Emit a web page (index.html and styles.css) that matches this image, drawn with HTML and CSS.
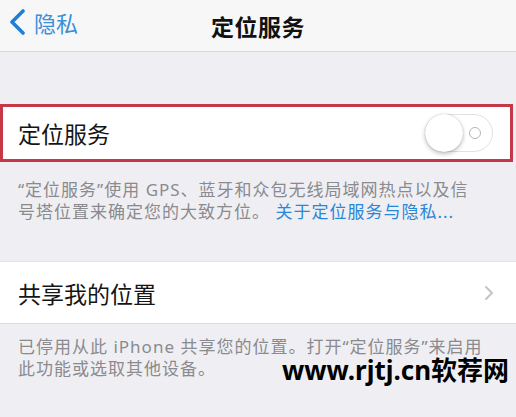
FILE: index.html
```html
<!DOCTYPE html>
<html lang="zh-CN">
  <head>
    <meta charset="UTF-8" />
    <meta name="viewport" content="width=device-width, initial-scale=1.0" />
    <title>定位服务</title>
    <link rel="stylesheet" href="styles.css">
  </head>

  <body>
    <div class="nav">
      <a href="#" class="back">
        <svg class="back-icon" width="18" height="26" viewBox="0 0 18 26">
          <path d="M15 2 L4 13 L15 24" fill="none" stroke="#1f7fd6" stroke-width="3.6" stroke-linecap="round" stroke-linejoin="round" />
        </svg>
        <span>隐私</span>
      </a>
      <h1 class="title">定位服务</h1>
    </div>

    <div class="group first">
      <div class="cell highlight">
        <span class="cell-label">定位服务</span>
        <div class="switch">
          <div class="knob"></div>
          <div class="off-mark"></div>
        </div>
      </div>
      <p class="note">
        “定位服务”使用 GPS、蓝牙和众包无线局域网热点以及信<br />号塔位置来确定您的大致方位。
        <a href="#" class="link">关于定位服务与隐私...</a>
      </p>
    </div>

    <div class="group second">
      <div class="cell bordered">
        <span class="cell-label">共享我的位置</span>
        <svg class="chevron" width="10" height="16" viewBox="0 0 10 16">
          <path d="M2 2 L8 8 L2 14" fill="none" stroke="#c4c4c9" stroke-width="2" stroke-linecap="round" stroke-linejoin="round" />
        </svg>
      </div>
      <p class="note">
        已停用从此 iPhone 共享您的位置。打开“定位服务”来启用<br />此功能或选取其他设备。
      </p>
    </div>

    <div class="watermark">www.rjtj.cn软荐网</div>
  </body>
</html>
```

FILE: styles.css
```css
body {
  margin: 0;
  width: 516px;
  height: 417px;
  overflow: hidden;
  background: #efeff3;
  font-family: "Noto Sans CJK SC", "Noto Sans", sans-serif;
  color: #111;
  position: relative;
}

.nav {
  height: 51px;
  background: #f7f7f8;
  border-bottom: 1px solid #d8d8dc;
  display: flex;
  align-items: center;
  justify-content: center;
  position: relative;
}

.back {
  position: absolute;
  left: 8px;
  top: 9px;
  display: flex;
  align-items: center;
  gap: 8px;
  color: #3a8fd8;
  text-decoration: none;
  font-size: 22px;
  line-height: 26px;
}

.title {
  margin: 0;
  font-size: 23px;
  font-weight: bold;
  color: #111;
  letter-spacing: 0.5px;
}

.group.first {
  padding-top: 52px;
}

.group.second {
  padding-top: 38px;
}

.cell {
  background: #fff;
  display: flex;
  align-items: center;
  justify-content: space-between;
  padding: 0 20px 0 18px;
}

.highlight {
  height: 52px;
  border: 3px solid #c43848;
  padding-left: 15px;
  margin-right: 3px;
}

.bordered {
  height: 61px;
  border-top: 1px solid #e4e4e8;
  border-bottom: 1px solid #dcdce0;
}

.cell-label {
  font-size: 23px;
  color: #151515;
}

.switch {
  width: 68px;
  height: 38px;
  border-radius: 20px;
  border: 1px solid #e2e2e4;
  background: #fff;
  display: flex;
  align-items: center;
  justify-content: space-between;
  padding-right: 11px;
  box-sizing: border-box;
  margin-right: -3px;
}

.knob {
  width: 38px;
  height: 38px;
  border-radius: 50%;
  background: #fff;
  box-shadow: 0 2px 4px rgba(0, 0, 0, 0.25), 0 0 1px rgba(0, 0, 0, 0.3);
  margin-left: -1px;
}

.off-mark {
  width: 10px;
  height: 10px;
  border-radius: 50%;
  border: 1.5px solid #b4b4b8;
}

.chevron {
  margin-right: 2px;
}

.note {
  margin: 0;
  padding: 17px 6px 0 18px;
  font-family: "Noto Sans", "Noto Sans CJK SC", sans-serif;
  font-size: 17px;
  line-height: 22px;
  color: #8a8a8f;
  letter-spacing: 1px;
}

.group.second .note {
  padding-top: 12px;
}

.link {
  color: #2a86d6;
  text-decoration: none;
}

.watermark {
  position: absolute;
  left: 282px;
  top: 356px;
  white-space: nowrap;
  font-family: "Noto Sans", "Noto Sans CJK SC", sans-serif;
  font-weight: bold;
  font-size: 26px;
  line-height: 28px;
  color: #000;
}
```
